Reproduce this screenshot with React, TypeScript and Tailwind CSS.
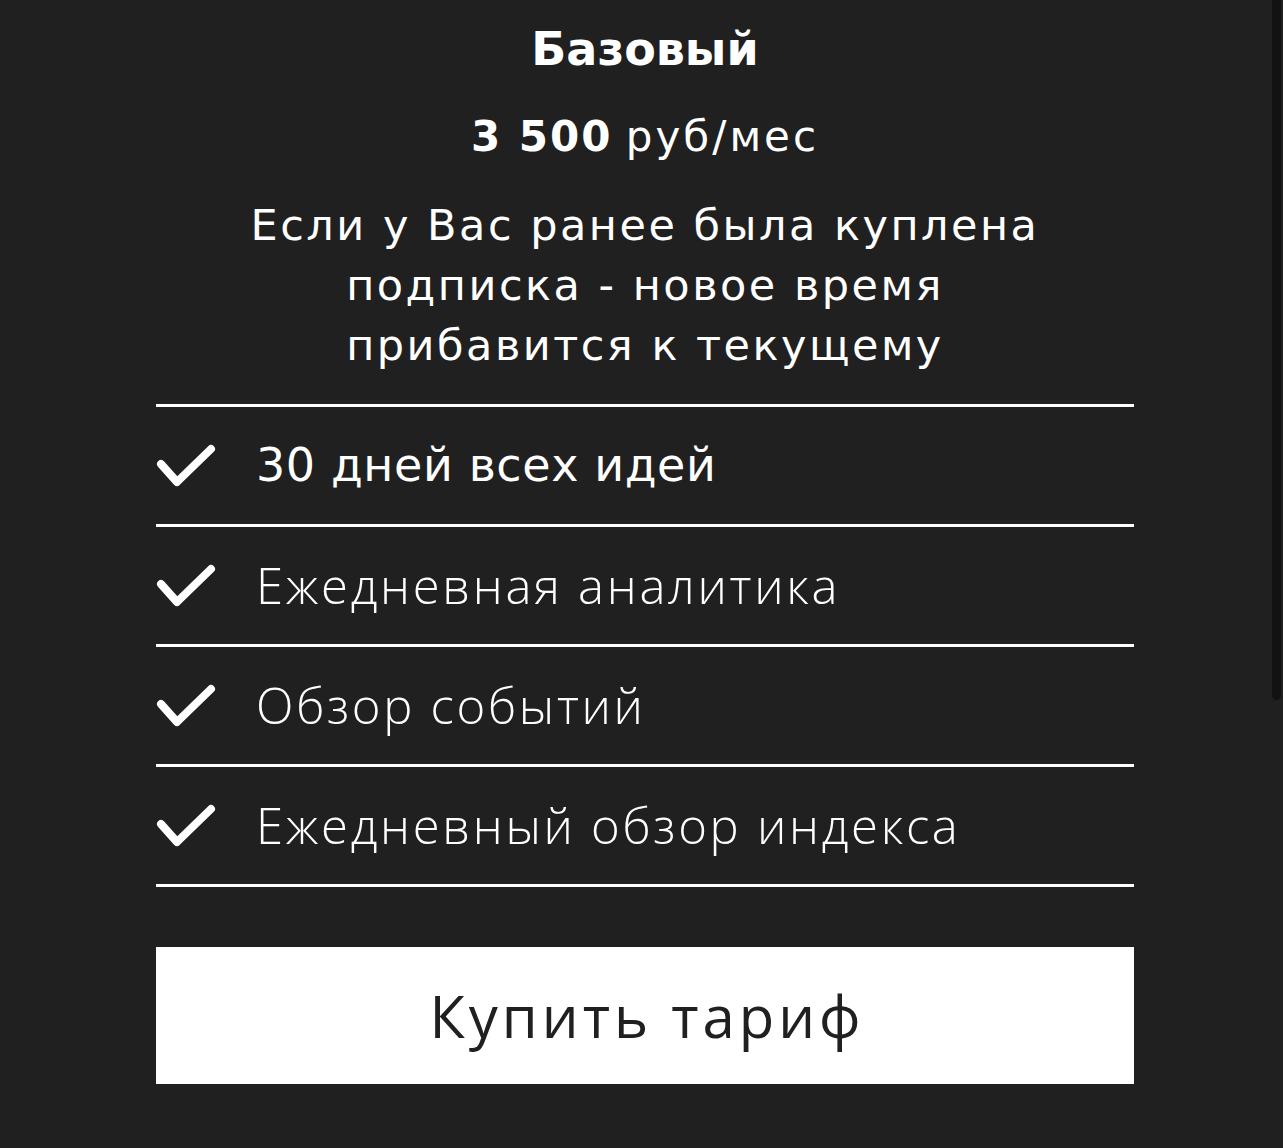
const features = [
  { text: '30 дней всех идей', alt: false },
  { text: 'Ежедневная аналитика', alt: true },
  { text: 'Обзор событий', alt: true },
  { text: 'Ежедневный обзор индекса', alt: true },
];

function Check() {
  return (
    <svg width="60" height="46" viewBox="0 0 60 46" fill="none" className="shrink-0">
      <path d="M5 21 L21 39 L55 6" stroke="white" strokeWidth="8" strokeLinecap="round" strokeLinejoin="round" />
    </svg>
  );
}

export default function App() {
  const wide = { fontFamily: '"DejaVu Sans", sans-serif' };
  const open = { fontFamily: '"Open Sans", sans-serif' };

  return (
    <div className="relative min-h-screen bg-[#202020] text-white">
      <div className="ml-[156px] w-[978px] pt-[19px] pb-[64px]">
        <h1 className="text-center text-[46px] font-bold leading-[60px]" style={wide}>
          Базовый
        </h1>
        <p className="mt-[33px] text-center text-[42px] leading-[50px]" style={wide}>
          <span className="font-bold tracking-[2px]">3 500</span>{' '}
          <span className="tracking-[3px]">руб/мес</span>
        </p>
        <p className="mt-[33px] text-center text-[43px] leading-[60px] tracking-[2.5px]" style={wide}>
          Если у Вас ранее была куплена
          <br />
          подписка - новое время
          <br />
          прибавится к текущему
        </p>

        <ul className="mt-[29px] border-t-[3px] border-white">
          {features.map((f) => (
            <li key={f.text} className="flex h-[120px] items-center gap-[40px] border-b-[3px] border-white">
              <Check />
              <span
                className={
                  f.alt
                    ? 'text-[49px] font-light tracking-[2.7px]'
                    : 'text-[46px] tracking-[0.6px]'
                }
                style={f.alt ? open : wide}
              >
                {f.text}
              </span>
            </li>
          ))}
        </ul>

        <button
          className="mt-[60px] flex h-[137px] w-full items-center justify-center bg-white pl-[4px] text-[58px] tracking-[4px] text-[#202020]"
          style={open}
        >
          Купить тариф
        </button>
      </div>

      {/* overlay scrollbar thumb */}
      <div className="absolute right-[2px] top-0 h-[700px] w-[9px] rounded-b-full bg-[#121212]" />
    </div>
  );
}
